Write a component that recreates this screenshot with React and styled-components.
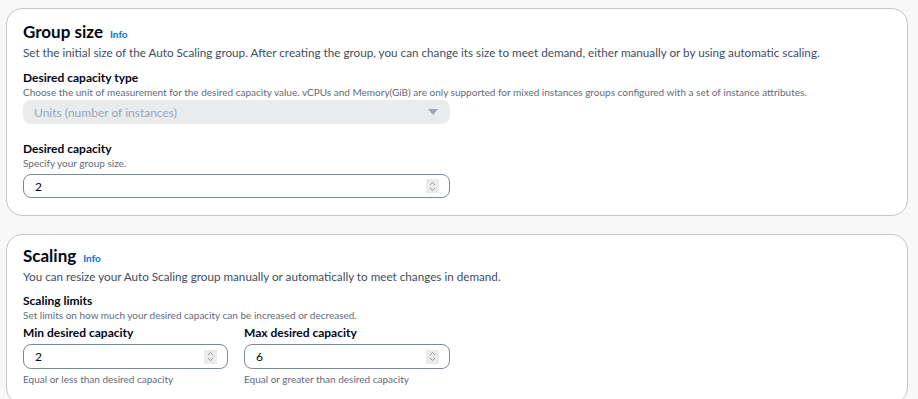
import React from "react";
import styled, { createGlobalStyle } from "styled-components";

const GlobalStyle = createGlobalStyle`
  body {
    margin: 0;
    background: #f8f8f8;
    font-family: "Lato", "Open Sans", sans-serif;
    color: #000716;
  }
`;

const Page = styled.div`
  display: flex;
  flex-direction: column;
  gap: 18px;
  padding: 8px 10px 0 6px;
`;

const Card = styled.section`
  background: #fff;
  border: 1px solid #c6c6cd;
  border-radius: 16px;
  padding: ${p => p.pt || "13px"} 16px 17px 16px;
`;

const Heading = styled.h2`
  display: flex;
  align-items: baseline;
  gap: 7px;
  margin: 0;
  font-size: 17px;
  line-height: 20px;
  font-weight: 700;
  color: #000716;
`;

const Info = styled.a`
  font-size: 10px;
  font-weight: 700;
  color: #0972d3;
`;

const Description = styled.p`
  margin: 0;
  font-size: 11.7px;
  line-height: 16px;
  color: #414d5c;
`;

const Field = styled.div`
  display: flex;
  flex-direction: column;
  width: ${p => p.width || "427px"};
  margin-top: ${p => p.mt || "0"};
`;

const Label = styled.div`
  font-size: 12px;
  line-height: 16px;
  font-weight: 700;
  color: #000716;
  margin-bottom: ${p => p.mb || "0"};
`;

const Hint = styled.div`
  font-size: 10px;
  line-height: 12px;
  color: #5f6b7a;
  white-space: nowrap;
  margin-bottom: ${p => p.mb || "5px"};
`;

const Select = styled.div`
  display: flex;
  align-items: center;
  justify-content: space-between;
  height: 24px;
  padding: 0 12px 0 11px;
  border-radius: 8px;
  background: #e9ebed;
  font-size: 12px;
  color: #9ba7b6;
`;

const Caret = styled.span`
  width: 0;
  height: 0;
  border-left: 5px solid transparent;
  border-right: 5px solid transparent;
  border-top: 6px solid #9ba7b6;
`;

const Input = styled.div`
  display: flex;
  align-items: center;
  justify-content: space-between;
  height: ${p => p.h || "22px"};
  padding: 0 10px 0 11px;
  border: 1px solid #7d8998;
  border-radius: 8px;
  background: #fff;
  font-size: 12px;
  color: #000716;
`;

const Spinner = styled.span`
  display: flex;
  align-items: center;
  justify-content: center;
  width: 13px;
  height: 14px;
  background: #ebebeb;
`;

const Row = styled.div`
  display: flex;
  gap: 16px;
  margin-top: 4px;
`;

const Footnote = styled.div`
  font-size: 10px;
  line-height: 14px;
  color: #5f6b7a;
  margin-top: 3px;
`;

const SpinIcon = () => (
  <Spinner>
    <svg width="7" height="11" viewBox="0 0 7 11" fill="none" stroke="#8c8c94" strokeWidth="0.9">
      <path d="M1 4 L3.5 1.5 L6 4" />
      <path d="M1 7 L3.5 9.5 L6 7" />
    </svg>
  </Spinner>
);

const NumberInput = ({ value, h }) => (
  <Input h={h}>
    <span>{value}</span>
    <SpinIcon />
  </Input>
);

export default function App() {
  return (
    <>
      <GlobalStyle />
      <Page>
        <Card>
          <Heading>
            Group size <Info>Info</Info>
          </Heading>
          <Description>
            Set the initial size of the Auto Scaling group. After creating the group, you can change its size to meet demand, either manually or by using automatic scaling.
          </Description>
          <Field mt="10px">
            <Label>Desired capacity type</Label>
            <Hint mb="2px">
              Choose the unit of measurement for the desired capacity value. vCPUs and Memory(GiB) are only supported for mixed instances groups configured with a set of instance attributes.
            </Hint>
            <Select>
              <span>Units (number of instances)</span>
              <Caret />
            </Select>
          </Field>
          <Field mt="17px">
            <Label>Desired capacity</Label>
            <Hint>Specify your group size.</Hint>
            <NumberInput value="2" />
          </Field>
        </Card>
        <Card pt="11px">
          <Heading>
            Scaling <Info>Info</Info>
          </Heading>
          <Description>
            You can resize your Auto Scaling group manually or automatically to meet changes in demand.
          </Description>
          <Field mt="9px">
            <Label>Scaling limits</Label>
            <Hint mb="0">Set limits on how much your desired capacity can be increased or decreased.</Hint>
          </Field>
          <Row>
            <Field width="205px">
              <Label mb="3px">Min desired capacity</Label>
              <NumberInput value="2" h="23px" />
              <Footnote>Equal or less than desired capacity</Footnote>
            </Field>
            <Field width="206px">
              <Label mb="3px">Max desired capacity</Label>
              <NumberInput value="6" h="23px" />
              <Footnote>Equal or greater than desired capacity</Footnote>
            </Field>
          </Row>
        </Card>
      </Page>
    </>
  );
}
